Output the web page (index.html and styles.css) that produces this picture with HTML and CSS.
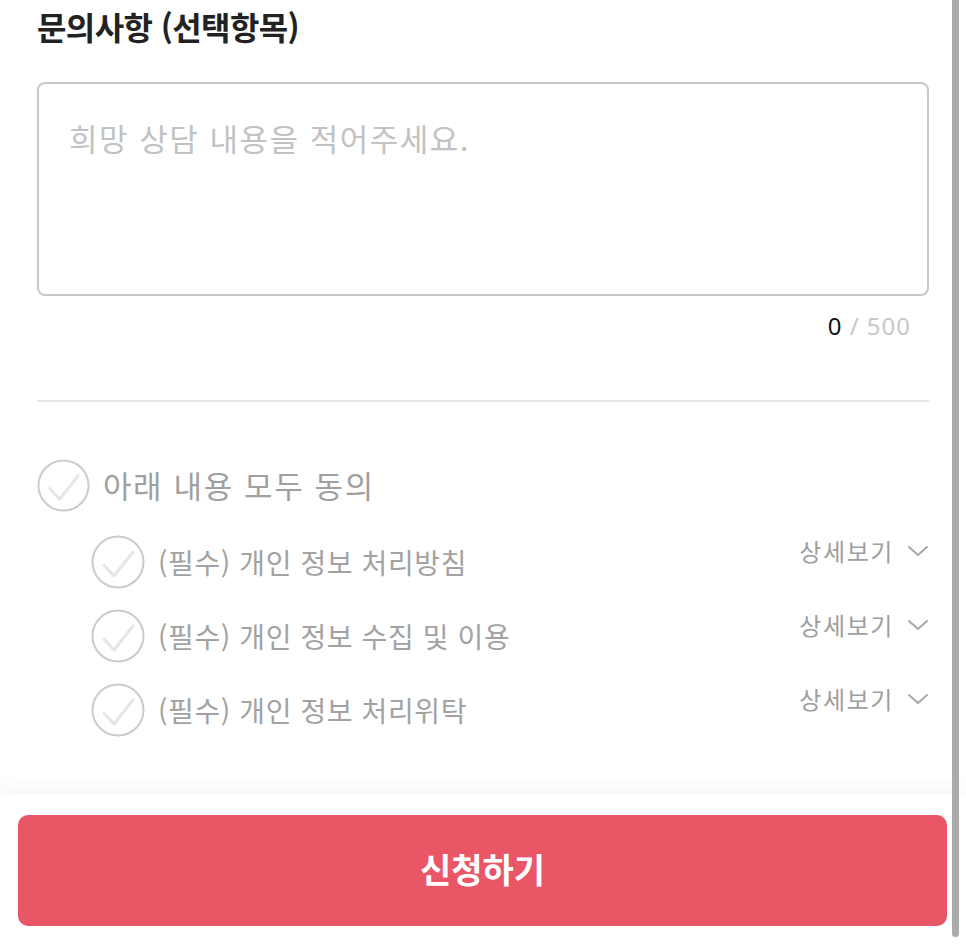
FILE: index.html
```html
<!DOCTYPE html>
<html lang="ko">
<head>
<meta charset="utf-8">
<title>문의사항</title>
<link rel="stylesheet" href="styles.css">
</head>
<body>
<main class="page">
  <h2 class="title">문의사항 (선택항목)</h2>
  <div class="textbox"><span class="placeholder">희망 상담 내용을 적어주세요.</span></div>
  <div class="counter"><span class="cur">0</span><span class="max"> / 500</span></div>
  <hr class="divider">
  <div class="agree-all">
    <svg class="check" viewBox="0 0 54 54"><circle cx="27" cy="27" r="25.5" fill="none" stroke="#cbcbcb" stroke-width="2"/><polyline points="13,30 23,41 42,17" fill="none" stroke="#e6e6e6" stroke-width="3" stroke-linecap="round" stroke-linejoin="round"/></svg>
    <span class="all-label">아래 내용 모두 동의</span>
  </div>
  <ul class="items">
    <li class="item">
      <svg class="check" viewBox="0 0 54 54"><circle cx="27" cy="27" r="25.5" fill="none" stroke="#cbcbcb" stroke-width="2"/><polyline points="13,30 23,41 42,17" fill="none" stroke="#e6e6e6" stroke-width="3" stroke-linecap="round" stroke-linejoin="round"/></svg>
      <span class="item-label">(필수) 개인 정보 처리방침</span>
      <span class="detail">상세보기<svg class="chev" viewBox="0 0 22 14"><polyline points="2,3 11,11 20,3" fill="none" stroke="#a8a8a8" stroke-width="2" stroke-linecap="round" stroke-linejoin="round"/></svg></span>
    </li>
    <li class="item">
      <svg class="check" viewBox="0 0 54 54"><circle cx="27" cy="27" r="25.5" fill="none" stroke="#cbcbcb" stroke-width="2"/><polyline points="13,30 23,41 42,17" fill="none" stroke="#e6e6e6" stroke-width="3" stroke-linecap="round" stroke-linejoin="round"/></svg>
      <span class="item-label">(필수) 개인 정보 수집 및 이용</span>
      <span class="detail">상세보기<svg class="chev" viewBox="0 0 22 14"><polyline points="2,3 11,11 20,3" fill="none" stroke="#a8a8a8" stroke-width="2" stroke-linecap="round" stroke-linejoin="round"/></svg></span>
    </li>
    <li class="item">
      <svg class="check" viewBox="0 0 54 54"><circle cx="27" cy="27" r="25.5" fill="none" stroke="#cbcbcb" stroke-width="2"/><polyline points="13,30 23,41 42,17" fill="none" stroke="#e6e6e6" stroke-width="3" stroke-linecap="round" stroke-linejoin="round"/></svg>
      <span class="item-label">(필수) 개인 정보 처리위탁</span>
      <span class="detail">상세보기<svg class="chev" viewBox="0 0 22 14"><polyline points="2,3 11,11 20,3" fill="none" stroke="#a8a8a8" stroke-width="2" stroke-linecap="round" stroke-linejoin="round"/></svg></span>
    </li>
  </ul>
</main>
<footer class="footer">
  <button class="submit" type="button">신청하기</button>
</footer>
<div class="scrollbar"></div>
</body>
</html>
```

FILE: styles.css
```css
html, body {
  margin: 0;
  padding: 0;
  background: #fff;
  font-family: "Noto Sans CJK KR", "Noto Sans", sans-serif;
  overflow: hidden;
}
.page {
  padding: 0 37px 0 37px;
}
.title {
  margin: 0;
  padding-top: 6px;
  font-size: 32px;
  line-height: 40px;
  font-weight: 700;
  color: #222;
  letter-spacing: -0.6px;
}
.textbox {
  margin-top: 36px;
  height: 214px;
  box-sizing: border-box;
  border: 2px solid #c9c9c9;
  border-radius: 8px;
  padding: 34px 30px;
}
.placeholder {
  font-size: 31px;
  line-height: 40px;
  letter-spacing: 1.5px;
  color: #c2c2c2;
  display: block;
}
.counter {
  margin-top: 15px;
  text-align: right;
  padding-right: 18px;
  font-size: 24px;
  line-height: 30px;
  letter-spacing: 1px;
  font-family: "Noto Sans", sans-serif;
}
.cur { color: #111; }
.max { color: #c8c8c8; }
.divider {
  margin: 59px 0 0 0;
  border: 0;
  height: 2px;
  background: #e6e6e6;
}
.agree-all {
  margin-top: 56px;
  display: flex;
  align-items: center;
  height: 54px;
}
.check {
  width: 54px;
  height: 54px;
  flex: none;
}
.agree-all .check {
  width: 53px;
  height: 53px;
}
.all-label {
  margin-left: 13px;
  font-size: 31px;
  letter-spacing: 1.6px;
  color: #a0a0a0;
  line-height: 40px;
}
.items {
  list-style: none;
  margin: 23px 0 0 0;
  padding: 0 0 0 54px;
  display: flex;
  flex-direction: column;
  gap: 20px;
}
.item {
  display: flex;
  align-items: center;
  height: 54px;
}
.item-label {
  margin-left: 13px;
  font-size: 28px;
  letter-spacing: 0.6px;
  color: #a2a2a2;
  line-height: 36px;
  flex: 1;
}
.detail {
  align-self: flex-start;
  display: flex;
  align-items: center;
  gap: 13px;
  font-size: 24px;
  letter-spacing: 1.6px;
  line-height: 32px;
  color: #9e9e9e;
}
.chev {
  width: 22px;
  height: 14px;
}
.footer {
  position: fixed;
  left: 0;
  right: 0;
  bottom: 0;
  height: 150px;
  box-sizing: border-box;
  padding: 20px 19px 19px 18px;
  background: #fff;
  box-shadow: 0 -8px 16px rgba(0, 0, 0, 0.035);
}
.submit {
  width: 100%;
  height: 111px;
  border: 0;
  border-radius: 10px;
  background: #e95766;
  color: #fff;
  font-family: "Noto Sans CJK KR", sans-serif;
  font-size: 34px;
  font-weight: 700;
  padding: 0 0 5px 0;
}
.scrollbar {
  position: fixed;
  top: 0;
  right: 7px;
  width: 7px;
  height: 937px;
  background: #ababab;
  border-radius: 0 0 4px 4px;
}
```
